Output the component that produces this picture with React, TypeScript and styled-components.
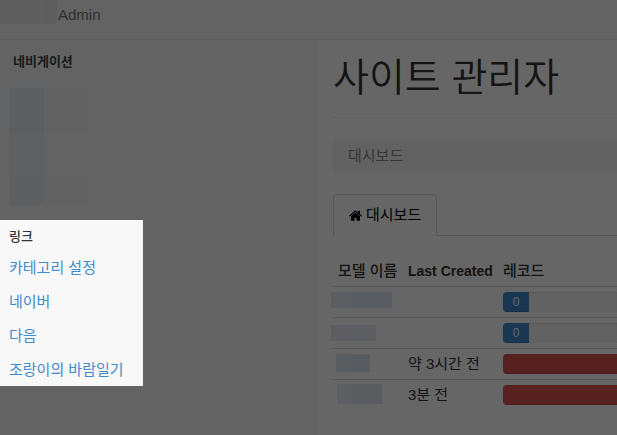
import React from "react";
import styled, { createGlobalStyle } from "styled-components";

const GlobalStyle = createGlobalStyle`
  *, *::before, *::after { box-sizing: border-box; }
  body {
    margin: 0;
    background: #fff;
    color: #333;
    font: 15px/20px "Liberation Sans", "Noto Sans CJK KR", sans-serif;
  }
`;

const Page = styled.div`
  display: flex;
  flex-direction: column;
  height: 100vh;
  overflow: hidden;
`;

const Navbar = styled.header`
  display: flex;
  flex: none;
  align-items: flex-start;
  height: 40px;
  background: #f8f8f8;
  border-bottom: 1px solid #e7e7e7;
`;

const BrandMask = styled.span`
  width: 57px;
  height: 24px;
  background: linear-gradient(to right, #ededed 44px, #ebebeb 44px);
`;

const Brand = styled.a`
  padding: 5px 1px;
  color: #777;
  text-decoration: none;
`;

const Body = styled.div`
  display: flex;
  flex: 1;
`;

const Sidebar = styled.aside`
  flex: 0 0 318px;
  background: #f8f8f8;
`;

const SideHeading = styled.h2<{ $strong?: boolean }>`
  margin: 0;
  color: ${(p) => (p.$strong ? "#444" : "#333")};
  font-size: 13px;
  line-height: 20px;
  font-weight: ${(p) => (p.$strong ? 700 : 500)};
`;

const NavSection = styled.nav`
  height: 180px;
  padding: 12px 9px 0;

  ${SideHeading} {
    padding: 0 4px;
  }
`;

const NavMask = styled.div`
  display: grid;
  grid-template: 8px 44px 44px 29px / 35px 44px;
  margin-top: 8px;
`;

const Tile = styled.span<{ $tone: string }>`
  background: ${(p) => p.$tone};
`;

const Spotlight = styled.nav`
  position: relative;
  z-index: 10;
  width: 143px;
  padding: 7px 9px 6px;
  background: #f8f8f8;
  box-shadow: 0 0 0 200vmax rgba(0, 0, 0, 0.6);
`;

const LinkList = styled.ul`
  display: grid;
  gap: 14px;
  margin: 11px 0 0;
  padding: 0;
  list-style: none;
  white-space: nowrap;
`;

const SideLink = styled.a`
  color: #428bca;
  text-decoration: none;
`;

const Main = styled.main`
  flex: 1;
  min-width: 0;
  padding-left: 15px;
`;

const Title = styled.h1`
  margin: 0 0 20px;
  padding: 18px 0 19px;
  border-bottom: 1px solid #eee;
  font-size: 39px;
  line-height: 40px;
  font-weight: 350;
  white-space: nowrap;
`;

const Breadcrumb = styled.ol`
  margin: 0 0 20px;
  padding: 8px 15px;
  border-radius: 4px 0 0 4px;
  background: #f5f5f5;
  color: #888;
  list-style: none;
`;

const Tabs = styled.div`
  display: flex;
  margin-bottom: 20px;
  border-bottom: 1px solid #ddd;
`;

const Tab = styled.button`
  display: flex;
  align-items: center;
  gap: 4px;
  margin-bottom: -1px;
  padding: 10px 15px;
  border: 1px solid #ddd;
  border-bottom-color: #fff;
  border-radius: 4px 4px 0 0;
  background: #fff;
  color: #000;
  font: inherit;
`;

const Table = styled.table`
  width: 100%;
  border-collapse: separate;
  border-spacing: 0;
  table-layout: fixed;
`;

const Head = styled.th<{ $width?: number; $latin?: boolean }>`
  width: ${(p) => (p.$width ? `${p.$width}px` : "auto")};
  height: 30px;
  padding: 5px;
  font-size: ${(p) => (p.$latin ? 14 : 15)}px;
  font-weight: ${(p) => (p.$latin ? 700 : 500)};
  text-align: left;
  white-space: nowrap;
`;

const Cell = styled.td`
  position: relative;
  height: 31px;
  padding: 5px;
  border-top: 1px solid #ddd;
  white-space: nowrap;

  &:last-child {
    padding-right: 0;
  }
`;

const NameMask = styled.span<{ $x: number; $y: number; $w: number; $h: number; $split: number; $a: string; $b: string }>`
  position: absolute;
  left: ${(p) => p.$x}px;
  top: ${(p) => p.$y}px;
  width: ${(p) => p.$w}px;
  height: ${(p) => p.$h}px;
  background: linear-gradient(to right, ${(p) => `${p.$a} ${p.$split}px, ${p.$b} ${p.$split}px`});
`;

const Progress = styled.div`
  height: 20px;
  overflow: hidden;
  border-radius: 4px 0 0 4px;
  background: #f5f5f5;
  box-shadow: inset 0 1px 2px rgba(0, 0, 0, 0.1);
`;

const Bar = styled.div<{ $full?: boolean }>`
  width: ${(p) => (p.$full ? "100%" : "26px")};
  height: 100%;
  background: ${(p) => (p.$full ? "#d9534f" : "#428bca")};
  box-shadow: inset 0 -1px 0 rgba(0, 0, 0, 0.15);
  color: #fff;
  font-size: 12px;
  text-align: center;
`;

const HomeIcon = () => (
  <svg width="13" height="11" viewBox="64 200 1664 1360" fill="currentColor" aria-hidden="true">
    <path d="M1472 992v480q0 26-19 45t-45 19h-384v-384h-256v384h-384q-26 0-45-19t-19-45v-480q0-1 .5-3t.5-3l575-474 575 474q1 2 1 6zm223-69l-62 74q-8 9-21 11h-3q-13 0-21-7l-692-577-692 577q-12 8-24 7-13-2-21-11l-62-74q-8-10-7-23.5t11-21.5l719-599q32-26 76-26t76 26l244 204v-195q0-14 9-23t23-9h192q14 0 23 9t9 23v408l219 182q10 8 11 21.5t-7 23.5z" />
  </svg>
);

const navTiles = ["#f5f7fa", "#f8f8f8", "#e3edf5", "#f5f5f5", "#eef0f4", "#f8f8f8", "#eaedf1", "#f6f6f6"];
const links = ["카테고리 설정", "네이버", "다음", "조랑이의 바람일기"];
const rows = [
  { x: -2, y: 5, w: 61, h: 16, split: 21, a: "#e6ebf3", b: "#dfe7f1", created: "", count: 0 },
  { x: -2, y: 7, w: 45, h: 16, split: 21, a: "#ebecf5", b: "#e9ebf3", created: "", count: 0 },
  { x: 3, y: 5, w: 34, h: 18, split: 16, a: "#e4ebf2", b: "#dde7ef", created: "약 3시간 전", count: null },
  { x: 4, y: 4, w: 45, h: 20, split: 15, a: "#e8edf4", b: "#e0e7f0", created: "3분 전", count: null },
];

export default function App() {
  return (
    <Page>
      <GlobalStyle />
      <Navbar>
        <BrandMask />
        <Brand href="#">Admin</Brand>
      </Navbar>
      <Body>
        <Sidebar>
          <NavSection>
            <SideHeading $strong>네비게이션</SideHeading>
            <NavMask>
              {navTiles.map((tone, i) => (
                <Tile key={i} $tone={tone} />
              ))}
            </NavMask>
          </NavSection>
          <Spotlight>
            <SideHeading>링크</SideHeading>
            <LinkList>
              {links.map((label) => (
                <li key={label}>
                  <SideLink href="#">{label}</SideLink>
                </li>
              ))}
            </LinkList>
          </Spotlight>
        </Sidebar>
        <Main>
          <Title>사이트 관리자</Title>
          <Breadcrumb>
            <li>대시보드</li>
          </Breadcrumb>
          <Tabs role="tablist">
            <Tab type="button" role="tab" aria-selected="true">
              <HomeIcon />
              대시보드
            </Tab>
          </Tabs>
          <Table>
            <thead>
              <tr>
                <Head $width={70}>모델 이름</Head>
                <Head $width={95} $latin>Last Created</Head>
                <Head>레코드</Head>
              </tr>
            </thead>
            <tbody>
              {rows.map((r, i) => (
                <tr key={i}>
                  <Cell>
                    <NameMask $x={r.x} $y={r.y} $w={r.w} $h={r.h} $split={r.split} $a={r.a} $b={r.b} />
                  </Cell>
                  <Cell>{r.created}</Cell>
                  <Cell>
                    <Progress>
                      <Bar $full={r.count === null}>{r.count}</Bar>
                    </Progress>
                  </Cell>
                </tr>
              ))}
            </tbody>
          </Table>
        </Main>
      </Body>
    </Page>
  );
}
